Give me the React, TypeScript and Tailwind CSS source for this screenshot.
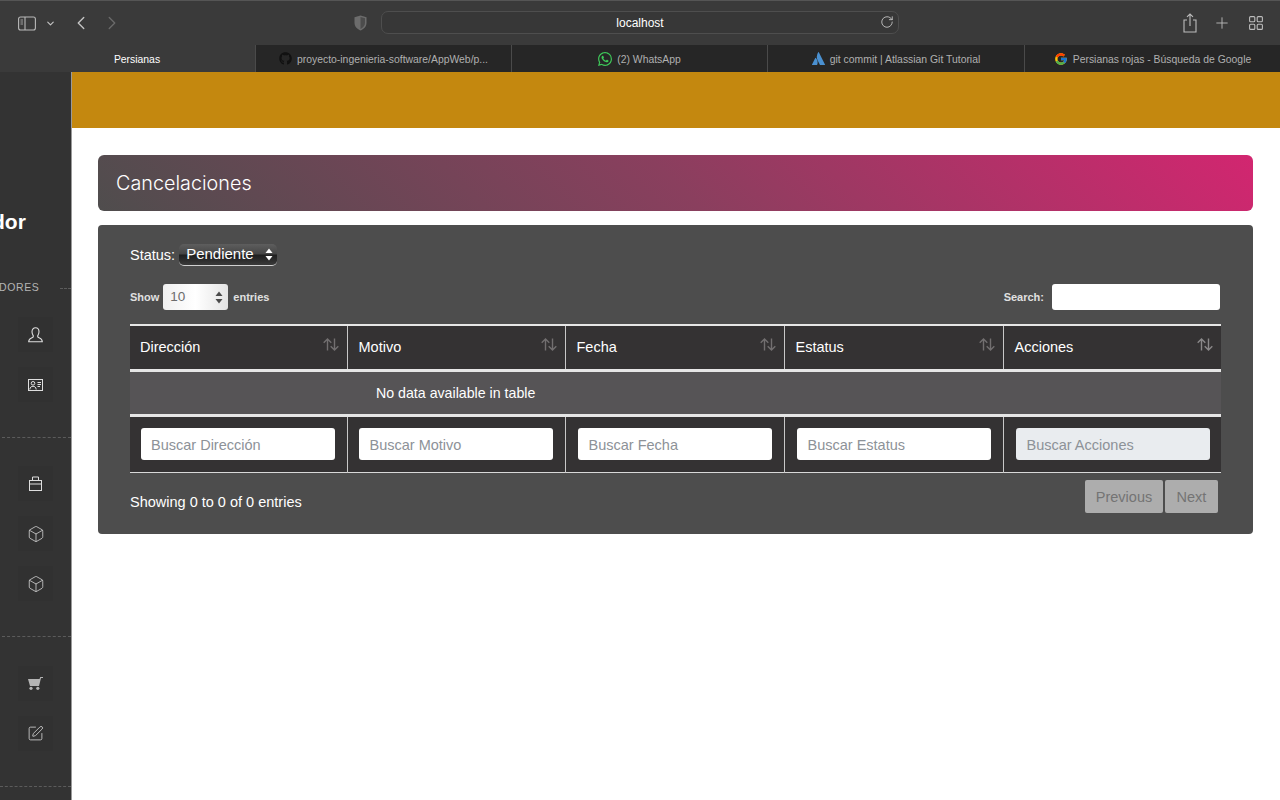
import { ChevronDown, ChevronLeft, ChevronRight, RotateCw, Plus, Box, SquarePen } from "lucide-react";
import { FaGithub } from "react-icons/fa";
import { SiWhatsapp, SiAtlassian } from "react-icons/si";
import { FcGoogle } from "react-icons/fc";
import type { ReactNode } from "react";

const Stepper = ({ up, down }: { up: string; down: string }) => (
  <svg width="8" height="13" viewBox="0 0 8 13">
    <path d="M4 0.5 L7.5 5 H0.5 Z" fill={up} />
    <path d="M4 12.5 L7.5 8 H0.5 Z" fill={down} />
  </svg>
);

const SideIcon = ({ children }: { children: ReactNode }) => (
  <div className="w-[35px] h-[35px] ml-[18px] bg-[#313131] flex items-center justify-center text-[#dedede]">{children}</div>
);

const Dash = ({ cls }: { cls: string }) => <div className={`border-t border-dashed border-[#5c5c5c] ${cls}`} />;

const Tab = ({ icon, label, w }: { icon: ReactNode; label: string; w: string }) => (
  <div className={`${w} h-full border-l border-[#4a4a4a] flex items-center justify-center gap-[5px] text-[#b0b0b0] text-[10.4px]`}>
    {icon}
    <span className="pt-[2px]">{label}</span>
  </div>
);

const Sort = ({ bright }: { bright?: boolean }) => (
  <span className={`absolute right-[8px] top-[12px] ${bright ? "text-[#8a8889]" : "text-[#726f70]"}`}>
    <svg width="16" height="13" viewBox="0 0 16 13" fill="none" stroke="currentColor" strokeWidth="1.4">
      <path d="M4.5 12.5 V1 M0.7 4.8 L4.5 1 L8.3 4.8" />
      <path d="M11.5 0.5 V12 M7.7 8.2 L11.5 12 L15.3 8.2" />
    </svg>
  </span>
);

const cols = ["Dirección", "Motivo", "Fecha", "Estatus", "Acciones"];
const widths = ["w-[217px]", "w-[218px]", "w-[219px]", "w-[219px]", "w-[218px]"];
const headPad = ["pl-[10px]", "pl-[11px]", "pl-[11px]", "pl-[11px]", "pl-[11px]"];
const inputPad = ["pl-[10px]", "pl-[11px]", "pl-[11px]", "pl-[11px]", "pl-[11px]"];
const inputGap = ["pl-[11px] pr-[12px]", "pl-[11px] pr-[12px]", "pl-[12px] pr-[12px]", "pl-[12px] pr-[12px]", "pl-[12px] pr-[11px]"];

export default function App() {
  return (
    <div className="w-[1280px] h-[800px] overflow-hidden bg-white flex flex-col font-['Liberation_Sans',sans-serif]">
      {/* Browser chrome */}
      <div className="h-[72px] shrink-0 bg-[#3a3a3a] flex flex-col">
        <div className="h-[45px] flex items-center relative border-t border-[#555]">
          <div className="flex items-center ml-[18px] text-[#b9b9b9]">
            <svg width="18" height="15" viewBox="0 0 18 15" fill="none" stroke="currentColor" strokeWidth="1.1">
              <rect x="0.6" y="1" width="16.8" height="13" rx="2" />
              <path d="M7 1 V14" />
              <path d="M2.5 4 H5 M2.5 6 H5 M2.5 8 H5" strokeWidth="0.8" />
            </svg>
            <ChevronDown size={11} strokeWidth={2.5} className="ml-[9px] text-[#c4c4c4]" />
            <ChevronLeft size={22} strokeWidth={1.5} className="ml-[14px] text-[#c4c4c4]" />
            <ChevronRight size={22} strokeWidth={1.5} className="ml-[9px] text-[#6a6a6a]" />
          </div>
          <svg width="13" height="16" viewBox="0 0 13 16" className="absolute left-[354px] top-[14px]">
            <path d="M6.5 0.5 L12.5 2.2 V8 C12.5 11.8 9.5 14.2 6.5 15.5 C3.5 14.2 0.5 11.8 0.5 8 V2.2 Z" fill="#6c6c6c" />
            <path d="M6.5 2 L11 3.3 V8 C11 10.8 8.8 12.8 6.5 13.9 Z" fill="#4c4c4c" />
          </svg>
          <div className="absolute left-[381px] top-[10px] w-[518px] h-[23px] rounded-[7px] border border-[#4e4e4e] bg-[#373737] flex items-center justify-center text-white text-[12px]">
            localhost
            <RotateCw size={14} strokeWidth={1.4} className="absolute right-[4px] top-[3px] text-[#cfcfcf]" />
          </div>
          <div className="ml-auto flex items-center mr-[17px] text-[#bcbcbc]">
            <svg width="14" height="20" viewBox="0 0 14 20" fill="none" stroke="currentColor" strokeWidth="1.1">
              <path d="M4 7 H1 V19 H13 V7 H10" />
              <path d="M7 13 V1 M4 3.8 L7 1 L10 3.8" />
            </svg>
            <Plus size={18} strokeWidth={1.2} className="ml-[16px]" />
            <svg width="14" height="14" viewBox="0 0 14 14" fill="none" stroke="currentColor" strokeWidth="1.1" className="ml-[18px]">
              <rect x="0.6" y="0.6" width="5.2" height="5.2" rx="1" />
              <rect x="8.2" y="0.6" width="5.2" height="5.2" rx="1" />
              <rect x="0.6" y="8.2" width="5.2" height="5.2" rx="1" />
              <rect x="8.2" y="8.2" width="5.2" height="5.2" rx="1" />
            </svg>
          </div>
        </div>
        <div className="h-[27px] flex items-center">
          <div className="w-[255px] h-full flex items-center justify-center text-white text-[10.4px] pt-[2px]">
            <span className="ml-[19px]">Persianas</span>
          </div>
          <div className="flex-1 h-full bg-[#262626] flex">
            <Tab w="w-[256px]" label="proyecto-ingenieria-software/AppWeb/p..." icon={<FaGithub size={13} className="text-[#111]" />} />
            <Tab w="w-[256px]" label="(2) WhatsApp" icon={<SiWhatsapp size={14} className="text-[#3ec95a]" />} />
            <Tab w="w-[257px]" label="git commit | Atlassian Git Tutorial" icon={<SiAtlassian size={13} className="text-[#4a90d0]" />} />
            <Tab w="w-[256px]" label="Persianas rojas - Búsqueda de Google" icon={<FcGoogle size={14} />} />
          </div>
        </div>
      </div>

      <div className="flex-1 flex min-h-0">
        {/* Sidebar */}
        <div className="w-[72px] shrink-0 bg-[#333333] border-r border-[#9a9a9a] flex flex-col overflow-hidden">
          <div className="mt-[138px] text-white text-[21px] font-bold leading-[24px] -ml-[8px]">dor</div>
          <div className="mt-[48px] flex items-center h-[12px]">
            <span className="text-[#b5b5b5] text-[10.5px] tracking-[0.6px] -ml-[1px]">DORES</span>
            <Dash cls="ml-auto w-[11px]" />
          </div>
          <div className="mt-[23px] flex flex-col gap-[15px]">
            <SideIcon>
              <svg width="15" height="16" viewBox="0 0 15 16" fill="none" stroke="currentColor" strokeWidth="1.1">
                <path d="M4 4.8 C4 2.4 5.5 0.8 7.5 0.8 C9.5 0.8 11 2.4 11 4.8 C11 7 10 8 9.6 9 C9.4 10 10 10.4 11.5 11 C13 11.6 14.3 12.5 14.3 14.8 H0.7 C0.7 12.5 2 11.6 3.5 11 C5 10.4 5.6 10 5.4 9 C5 8 4 7 4 4.8 Z" />
              </svg>
            </SideIcon>
            <SideIcon>
              <svg width="15" height="12" viewBox="0 0 15 12" fill="none" stroke="currentColor" strokeWidth="1">
                <rect x="0.5" y="0.5" width="14" height="11" />
                <circle cx="5" cy="4.3" r="1.8" />
                <path d="M1.8 10.5 C2 8 3.5 7.3 5 7.3 C6.5 7.3 8 8 8.2 10.5" />
                <path d="M9.5 3.5 H13 M9.5 5.5 H13 M9.5 7.5 H12" />
              </svg>
            </SideIcon>
          </div>
          <Dash cls="mt-[35px] ml-[2px]" />
          <div className="mt-[28px] flex flex-col gap-[15px]">
            <SideIcon>
              <svg width="13" height="15" viewBox="0 0 13 15" fill="none" stroke="currentColor" strokeWidth="1">
                <rect x="0.5" y="4.5" width="12" height="10" />
                <path d="M3.5 4.5 V1 H9.5 V4.5 M0.5 8 H12.5" />
              </svg>
            </SideIcon>
            <SideIcon><Box size={18} strokeWidth={1} /></SideIcon>
            <SideIcon><Box size={18} strokeWidth={1} /></SideIcon>
          </div>
          <Dash cls="mt-[35px] ml-[2px]" />
          <div className="mt-[29px] flex flex-col gap-[15px]">
            <SideIcon>
              <svg width="15" height="13" viewBox="0 0 15 13" fill="#b4b4b4">
                <path d="M0 2 H11.5 L12.3 0 H15 V1 H13 L11 9 H2 L0 2 Z" />
                <circle cx="3" cy="11.3" r="1.6" />
                <circle cx="9.8" cy="11.3" r="1.6" />
              </svg>
            </SideIcon>
            <SideIcon><SquarePen size={17} strokeWidth={1.1} /></SideIcon>
          </div>
          <Dash cls="mt-[35px]" />
        </div>

        {/* Main */}
        <div className="flex-1 flex flex-col min-w-0">
          <div className="h-[56px] shrink-0 bg-[#c4880f]" />
          <div className="mt-[27px] ml-[26px] mr-[27px] flex flex-col">
            <div className="h-[56px] rounded-[6px] bg-[linear-gradient(45deg,#4f4d4d_0%,#8a3f5e_50%,#d22670_100%)] flex items-center pl-[18px] pt-[1px] text-white text-[19.8px] font-['Inter',sans-serif] font-light">
              Cancelaciones
            </div>
            <div className="mt-[14px] h-[309px] rounded-[4px] bg-[#4d4d4d] px-[32px] pt-[19px] text-white">
              <div className="flex items-center h-[22px] text-[14.5px]">
                <span className="pt-[1px]">Status:</span>
                <div className="ml-[4px] w-[98px] h-[22px] rounded-[5px] border-b border-[#d0d0d0] bg-[linear-gradient(#5e5e5e_0%,#454545_48%,#1e1e1e_52%,#3a3a3a_100%)] flex items-center pl-[7px] pr-[4px] justify-between text-[15px]">
                  <span>Pendiente</span>
                  <Stepper up="#fff" down="#fff" />
                </div>
              </div>
              <div className="mt-[18px] flex items-center justify-between h-[26px] text-[11px] font-bold text-[#e0e0e0]">
                <div className="flex items-center">
                  <span>Show</span>
                  <div className="ml-[4px] w-[65px] h-[26px] rounded-[3px] bg-[linear-gradient(90deg,#f0f0f0,#fff_50%,#e4e4e4)] flex items-center justify-between pl-[7px] pr-[5px] text-[#6c6c6c] text-[13.5px] font-normal">
                    <span>10</span>
                    <Stepper up="#4a4a4a" down="#4a4a4a" />
                  </div>
                  <span className="ml-[5px]">entries</span>
                </div>
                <div className="flex items-center">
                  <span>Search:</span>
                  <div className="ml-[8px] w-[168px] h-[26px] rounded-[3px] bg-white mr-[1px]" />
                </div>
              </div>
              <table className="mt-[14px] w-[1091px] table-fixed border-collapse text-[14.5px]">
                <thead>
                  <tr className="h-[45px] bg-[#343233] border-t-2 border-t-[#e6e6e6] border-b-[3px] border-b-[#e6e6e6]">
                    {cols.map((c, i) => (
                      <th key={c} className={`${widths[i]} ${headPad[i]} relative text-left font-normal pt-[1px] ${i < 4 ? "border-r border-[#c8c8c8]" : ""}`}>
                        {c}
                        <Sort bright={i === 4} />
                      </th>
                    ))}
                  </tr>
                </thead>
                <tbody>
                  <tr className="h-[45px] bg-[#565456] border-b-[3px] border-b-[#e6e6e6]">
                    <td colSpan={5} className="pl-[246px] pt-[2px] text-[14.2px]">No data available in table</td>
                  </tr>
                </tbody>
                <tfoot>
                  <tr className="h-[57px] bg-[#343233] border-b border-[#d8d8d8]">
                    {cols.map((c, i) => (
                      <td key={c} className={`${inputGap[i]} ${i < 4 ? "border-r border-[#c8c8c8]" : ""}`}>
                        <div className={`h-[32px] w-full rounded-[3px] flex items-center ${inputPad[i]} pt-[3px] text-[#8d9298] ${i === 4 ? "bg-[#e9ecef]" : "bg-white"}`}>
                          Buscar {c}
                        </div>
                      </td>
                    ))}
                  </tr>
                </tfoot>
              </table>
              <div className="mt-[7px] flex items-start justify-between text-[14.5px]">
                <span className="mt-[12px]">Showing 0 to 0 of 0 entries</span>
                <div className="flex gap-[2px] mr-[3px] text-[#747474]">
                  <div className="w-[78px] h-[33px] rounded-[2px] bg-[#adadad] flex items-center justify-center pt-[3px]">Previous</div>
                  <div className="w-[53px] h-[33px] rounded-[2px] bg-[#adadad] flex items-center justify-center pt-[3px]">Next</div>
                </div>
              </div>
            </div>
          </div>
        </div>
      </div>
    </div>
  );
}
